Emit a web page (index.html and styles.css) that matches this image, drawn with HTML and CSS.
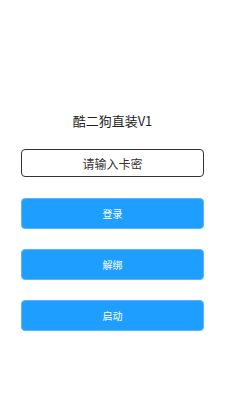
FILE: index.html
```html
<!DOCTYPE html>
<html lang="zh-CN">
<head>
    <meta charset="UTF-8">
    <meta name="viewport" content="width=device-width, initial-scale=1.0">
    <title>酷二狗直装V1</title>
    <link rel="stylesheet" href="styles.css">
</head>
<body>

    <div class="login-box">
        <div class="title">酷二狗直装V1</div>
        <input class="card-input" type="text" placeholder="请输入卡密">
        <button class="btn">登录</button>
        <button class="btn">解绑</button>
        <button class="btn">启动</button>
    </div>

</body>
</html>
```

FILE: styles.css
```css
body {
    font-family: "Noto Sans CJK SC", "Noto Sans", sans-serif;
    margin: 0;
    padding: 0;
    background-color: #fff;
}
.login-box {
    display: flex;
    flex-direction: column;
    padding: 111px 21px 0 21px;
}
.title {
    font-size: 13px;
    line-height: 20px;
    color: #222;
    text-align: center;
    margin-bottom: 18px;
}
.card-input {
    box-sizing: border-box;
    height: 28px;
    width: 100%;
    border: 1px solid #333;
    border-radius: 4px;
    padding: 0;
    font-family: inherit;
    font-size: 12px;
    text-align: center;
    outline: none;
}
.card-input::placeholder {
    color: #333;
}
.btn {
    box-sizing: border-box;
    height: 31px;
    width: 100%;
    margin-top: 21px;
    background-color: #1E9FFF;
    color: #fff;
    border: 1px solid #5bb6f8;
    border-radius: 4px;
    font-family: inherit;
    font-size: 10px;
    padding: 0;
}
.btn + .btn {
    margin-top: 20px;
}
```
